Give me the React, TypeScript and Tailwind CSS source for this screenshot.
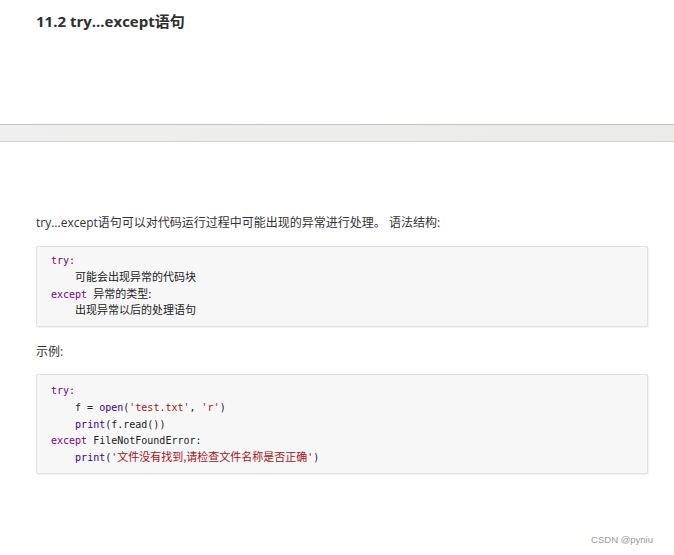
const kw = "text-[#770088]";
const fn = "text-[#3300aa]";
const str = "text-[#aa1111]";

const Cjk = ({ children }: { children: React.ReactNode }) => (
    <span className="text-[11px] leading-none font-['Noto_Sans_CJK_SC',sans-serif]">{children}</span>
);

const CodeBlock = ({ lines, pad }: { lines: React.ReactNode[]; pad: string }) => (
    <pre
        className={`mx-[36px] w-[612px] bg-[#f7f7f8] border border-[#e2e2e2] rounded-[2px] shadow-[1px_1px_1px_rgba(0,0,0,0.06)] px-[14px] ${pad} text-[10px] leading-[16.75px] text-[#222] font-['DejaVu_Sans_Mono','Noto_Sans_CJK_SC',monospace] whitespace-pre`}
    >
        {lines.map((l, i) => (
            <div key={i} className="h-[16.75px]">{l}</div>
        ))}
    </pre>
);

export default function App() {
    return (
        <div className="w-[674px] h-[555px] bg-white relative font-['Open_Sans','Noto_Sans_CJK_SC',sans-serif] text-[#333]">
            <h2 className="pl-[36px] pt-[10px] text-[15px] leading-[22px] font-bold text-[#2f2f2f]">11.2 try...except语句</h2>

            <div className="mt-[92px] h-[18px] border-t border-t-[#c2c2c2] border-b border-b-[#d2d2d2] bg-gradient-to-r from-[#efefef] to-[#ebebe7]" />

            <p className="mt-[72px] pl-[36px] text-[12px] leading-[18px] text-[#333]">
                try...except语句可以对代码运行过程中可能出现的异常进行处理。 语法结构:
            </p>

            <div className="mt-[14px]">
                <CodeBlock
                    pad="pt-[6px] pb-[6px]"
                    lines={[
                        <span className={kw}>try:</span>,
                        <span>    <Cjk>可能会出现异常的代码块</Cjk></span>,
                        <span><span className={kw}>except</span> <Cjk>异常的类型:</Cjk></span>,
                        <span>    <Cjk>出现异常以后的处理语句</Cjk></span>,
                    ]}
                />
            </div>

            <p className="mt-[16px] pl-[36px] text-[12px] leading-[18px] text-[#333]">示例:</p>

            <div className="mt-[13px]">
                <CodeBlock
                    pad="pt-[8px] pb-[6px]"
                    lines={[
                        <span className={kw}>try:</span>,
                        <span>    f = <span className={fn}>open</span>(<span className={str}>'test.txt'</span>, <span className={str}>'r'</span>)</span>,
                        <span>    <span className={fn}>print</span>(f.read())</span>,
                        <span><span className={kw}>except</span> FileNotFoundError:</span>,
                        <span>    <span className={fn}>print</span>(<span className={str}>'<Cjk>文件没有找到,请检查文件名称是否正确</Cjk>'</span>)</span>,
                    ]}
                />
            </div>

            <div className="absolute right-[21px] bottom-[8px] text-[9.5px] leading-[14px] text-[#999] font-['Liberation_Sans',sans-serif]">
                CSDN @pyniu
            </div>
        </div>
    );
}
